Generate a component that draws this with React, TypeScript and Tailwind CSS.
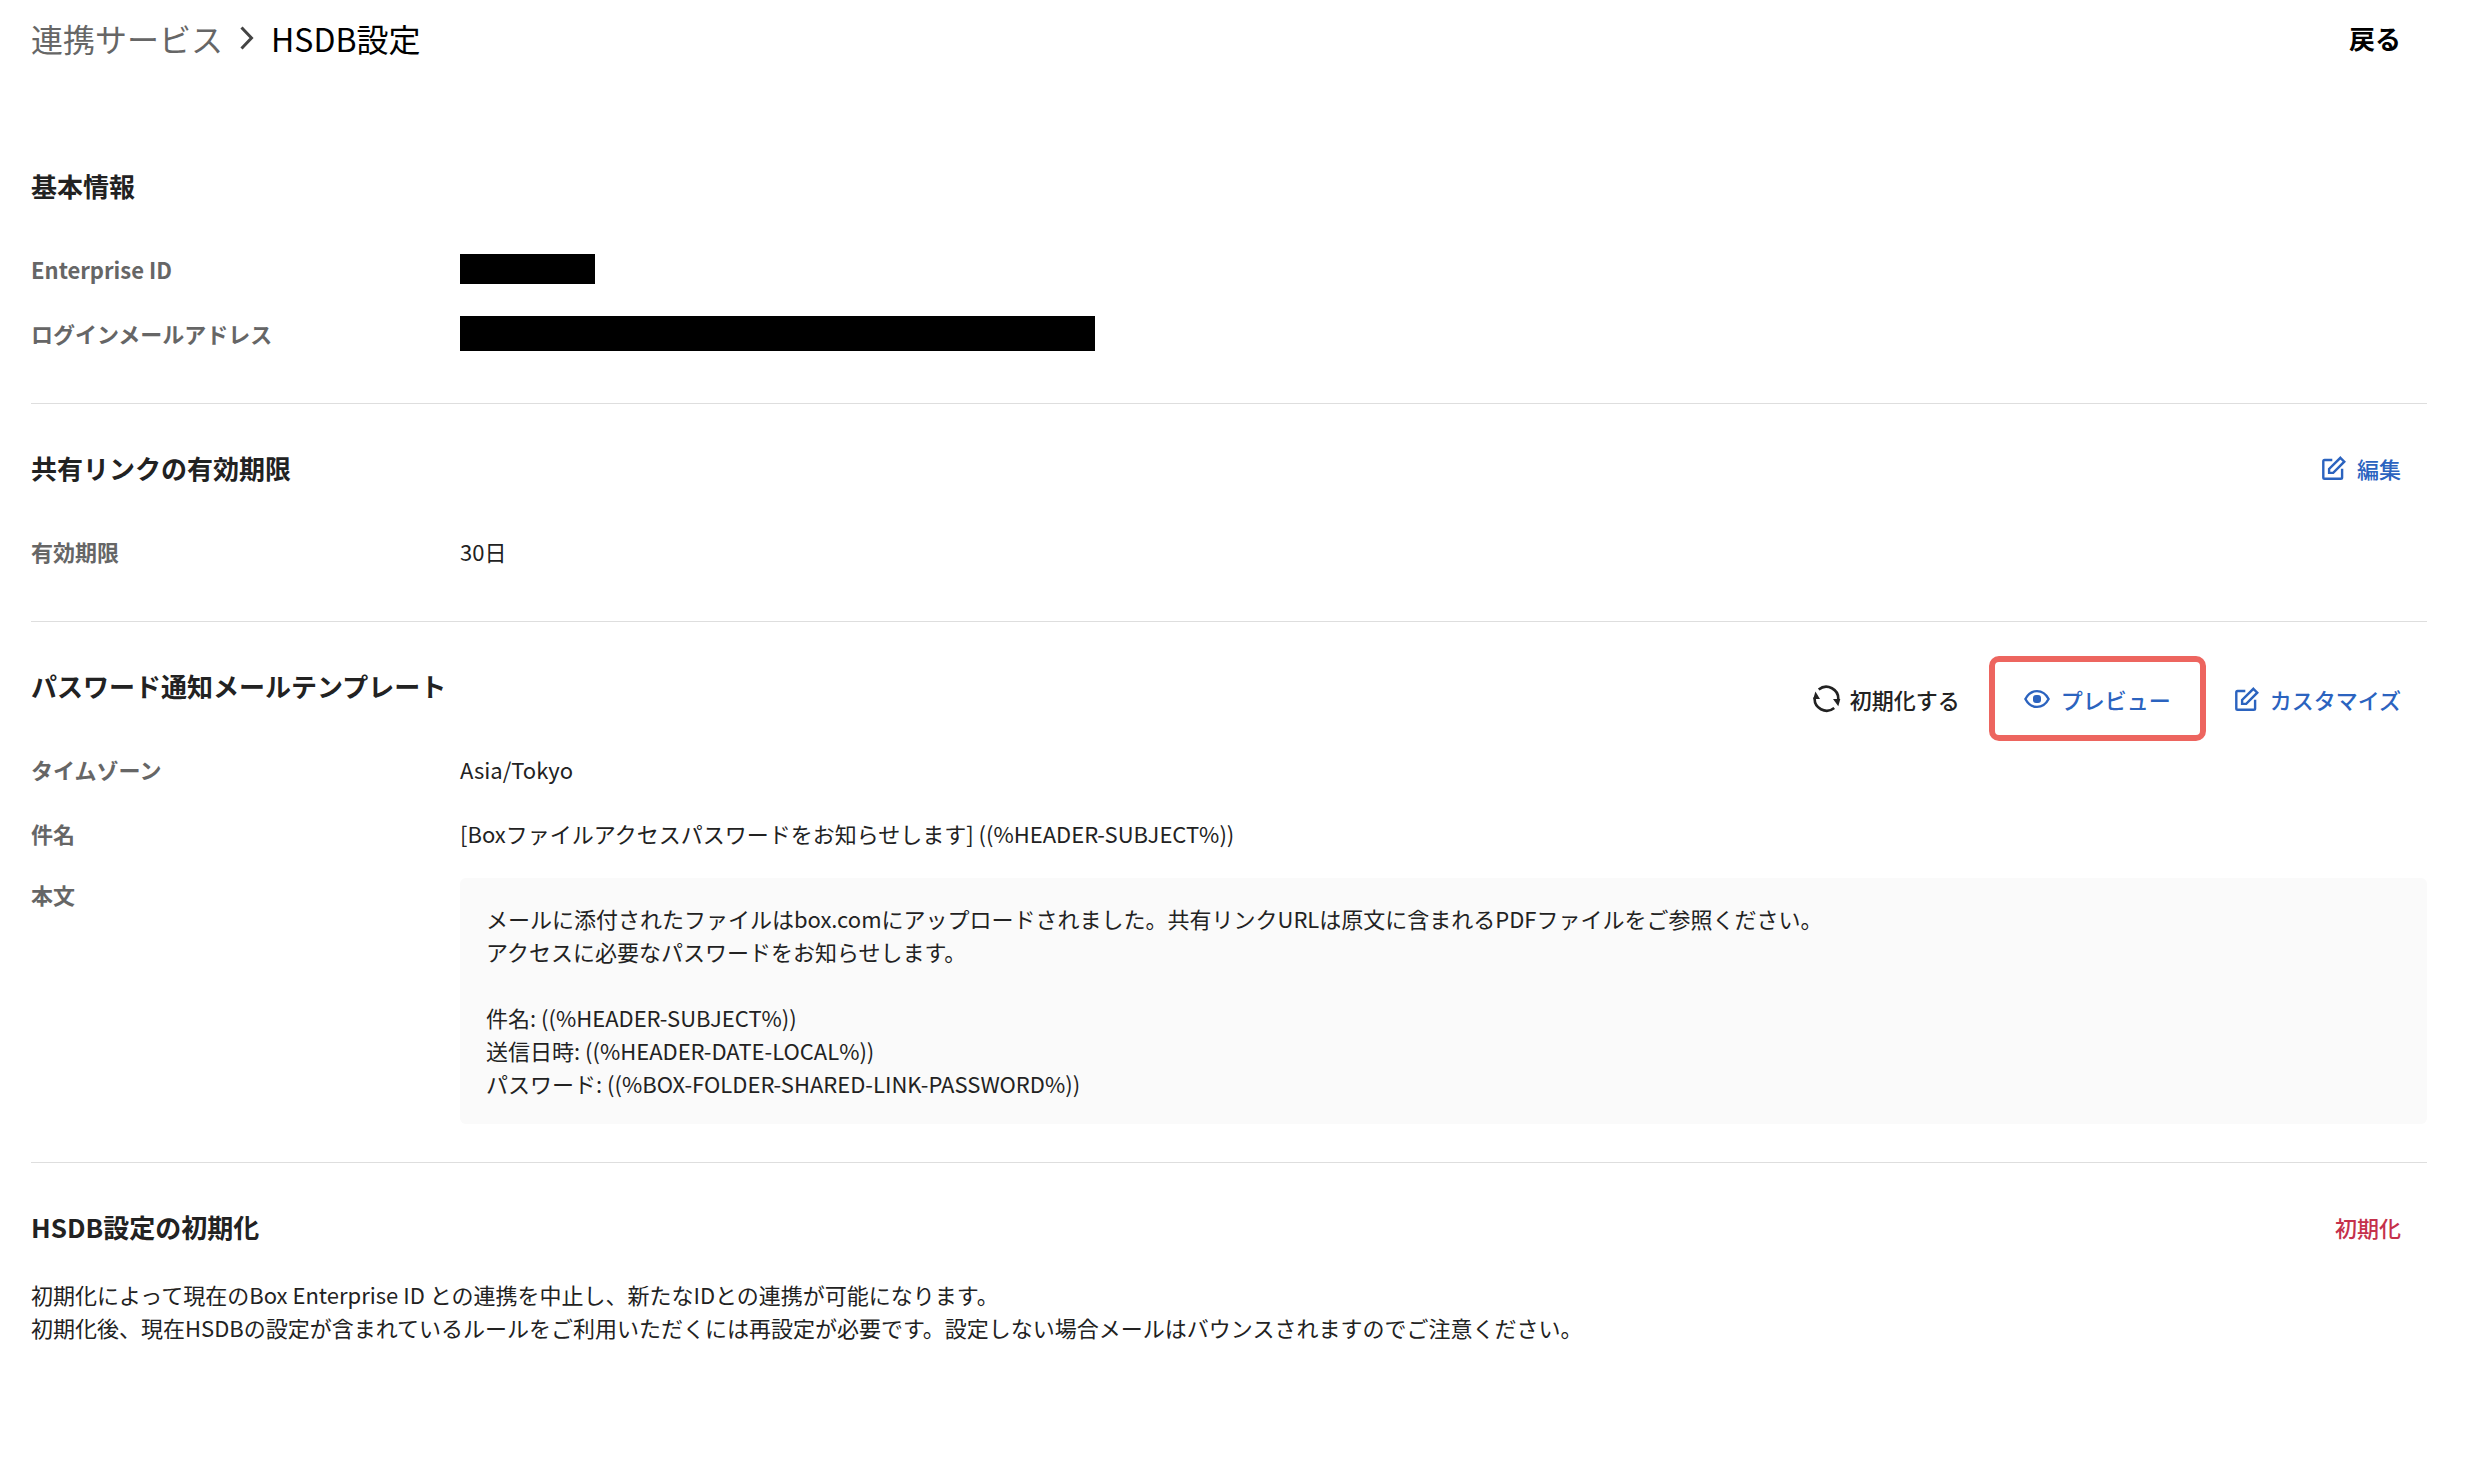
import type { ReactNode } from "react";

const MAIL_BODY = `メールに添付されたファイルはbox.comにアップロードされました。共有リンクURLは原文に含まれるPDFファイルをご参照ください。
アクセスに必要なパスワードをお知らせします。

件名: ((%HEADER-SUBJECT%))
送信日時: ((%HEADER-DATE-LOCAL%))
パスワード: ((%BOX-FOLDER-SHARED-LINK-PASSWORD%))`;

function EditIcon() {
  return (
    <svg className="size-6" viewBox="0 0 24 24" fill="none" stroke="currentColor" strokeWidth="2.4" aria-hidden="true">
      <path d="M10.300 4H2.600a1.300 1.300 0 0 0-1.300 1.300V21.400a1.300 1.300 0 0 0 1.300 1.300H18.800a1.300 1.300 0 0 0 1.300-1.300V12.800" />
      <path d="M18.400 1.800 22.300 5.700 11.200 16.900H7.100V13Z" />
    </svg>
  );
}

function EyeIcon() {
  return (
    <svg className="h-[20px] w-[26px]" viewBox="0 0 26 20" fill="none" stroke="currentColor" strokeWidth="2.4" aria-hidden="true">
      <path d="M1.400 10C4 5 8 2.100 13 2.100S22 5 24.600 10C22 15 18 17.900 13 17.900S4 15 1.400 10Z" />
      <rect x="9" y="6" width="8" height="8" rx="3" fill="currentColor" stroke="none" />
    </svg>
  );
}

function ResetIcon() {
  return (
    <svg className="size-7" viewBox="0 0 28 28" fill="none" stroke="currentColor" strokeWidth="2.6" aria-hidden="true">
      <path d="M5.700 4.500A12 12 0 0 1 25.200 15" />
      <path d="M21.200 23A12 12 0 0 1 1.700 12.500" />
      <path d="M20 14H27.300L25.300 21.200Z" fill="currentColor" stroke="none" />
      <path d="M7 14H0.200L2.400 6.600Z" fill="currentColor" stroke="none" />
    </svg>
  );
}

function Section({ title, actions, children }: { title: string; actions?: ReactNode; children: ReactNode }) {
  return (
    <section className="border-b border-[#dedede] pt-[34px] pb-[38px] last:border-b-0">
      <div className="mb-[21px] flex h-[60px] items-start justify-between">
        <h2 className="text-[26px] leading-[60px] font-bold">{title}</h2>
        {actions}
      </div>
      {children}
    </section>
  );
}

function Row({ label, children }: { label: string; children: ReactNode }) {
  return (
    <div className="flex h-[64px] items-center">
      <dt className="w-[429px] shrink-0 font-bold text-[#666]">{label}</dt>
      <dd>{children}</dd>
    </div>
  );
}

export default function App() {
  return (
    <main
      lang="ja"
      className="min-h-screen bg-white pr-[44px] pl-[31px] font-['Noto_Sans_CJK_JP',sans-serif] text-[22px] leading-[32px] text-[#222]"
    >
      <header className="flex h-[76px] items-center justify-between pr-[26px] text-black">
        <nav className="flex items-center text-[32px] leading-[48px]">
          <a href="#services" className="text-[#666]">連携サービス</a>
          <svg className="mx-[17px] h-[26px] w-[14px]" viewBox="0 0 14 26" fill="none" stroke="#444" strokeWidth="3" aria-hidden="true">
            <path d="M1.500 2.500 11.500 13 1.500 23.500" />
          </svg>
          <span>HSDB設定</span>
        </nav>
        <button type="button" className="text-[26px] font-bold">戻る</button>
      </header>

      <div className="pt-[46px]">
        <Section title="基本情報">
          <dl>
            <Row label="Enterprise ID">
              <div className="h-[30px] w-[135px] bg-black" />
            </Row>
            <Row label="ログインメールアドレス">
              <div className="h-[35px] w-[635px] bg-black" />
            </Row>
          </dl>
        </Section>

        <Section
          title="共有リンクの有効期限"
          actions={
            <button type="button" className="mr-[26px] flex h-[60px] items-center gap-[11px] font-medium text-[#2b63bf]">
              <EditIcon />
              編集
            </button>
          }
        >
          <dl>
            <Row label="有効期限">30日</Row>
          </dl>
        </Section>

        <Section
          title="パスワード通知メールテンプレート"
          actions={
            <div className="mr-[26px] flex h-[85px] items-center gap-[29px] font-medium text-[#2b63bf]">
              <button type="button" className="flex items-center gap-[9px] text-[#222]">
                <ResetIcon />
                初期化する
              </button>
              <button
                type="button"
                className="flex h-[85px] items-center gap-[11px] rounded-[10px] border-6 border-[#ed655f] px-[29px]"
              >
                <EyeIcon />
                プレビュー
              </button>
              <button type="button" className="flex items-center gap-[11px]">
                <EditIcon />
                カスタマイズ
              </button>
            </div>
          }
        >
          <dl>
            <Row label="タイムゾーン">Asia/Tokyo</Row>
            <Row label="件名">[Boxファイルアクセスパスワードをお知らせします] ((%HEADER-SUBJECT%))</Row>
            <div className="mt-[13px] flex">
              <dt className="w-[429px] shrink-0 font-bold text-[#666]">本文</dt>
              <dd className="flex-1 rounded-[6px] bg-[#fafafa] px-[26px] py-[24px] leading-[33px] whitespace-pre-wrap">
                {MAIL_BODY}
              </dd>
            </div>
          </dl>
        </Section>

        <Section
          title="HSDB設定の初期化"
          actions={
            <button type="button" className="mr-[26px] h-[60px] font-medium text-[#c5314b]">
              初期化
            </button>
          }
        >
          <p className="leading-[33px]">
            初期化によって現在のBox Enterprise ID との連携を中止し、新たなIDとの連携が可能になります。
            <br />
            初期化後、現在HSDBの設定が含まれているルールをご利用いただくには再設定が必要です。設定しない場合メールはバウンスされますのでご注意ください。
          </p>
        </Section>
      </div>
    </main>
  );
}
